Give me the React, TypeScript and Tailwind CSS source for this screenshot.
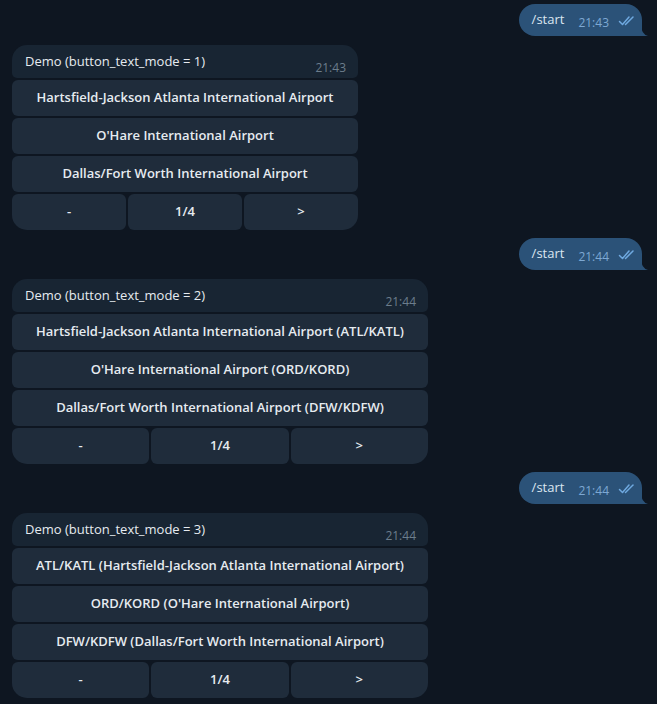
import React from "react";

const FONT = { fontFamily: '"Open Sans", "Noto Sans", sans-serif' };

function Checks() {
  return (
    <svg width="20" height="12" viewBox="0 0 20 12" className="ml-[9px] mt-[6px]">
      <path d="M1.5 6.5 L4.5 9.5 L11 2" fill="none" stroke="#6fa9e0" strokeWidth="1.5" strokeLinecap="round" strokeLinejoin="round" />
      <path d="M7.5 9.5 L15 2" fill="none" stroke="#6fa9e0" strokeWidth="1.5" strokeLinecap="round" strokeLinejoin="round" />
    </svg>
  );
}

function Outgoing({ time }: { time: string }) {
  return (
    <div className="flex justify-end pr-[15px]">
      <div className="relative">
        <div className="flex items-start h-[32px] bg-[#2b5278] rounded-[16px] rounded-br-none pl-[13px] pr-[4px] pt-[5px]">
          <span className="text-[13px] text-[#dbe6f0] leading-[20px]">/start</span>
          <span className="text-[12px] text-[#7da8d3] leading-[16px] ml-[14px] mt-[6px]">{time}</span>
          <Checks />
        </div>
        <svg className="absolute bottom-0 right-[-6px]" width="7" height="12" viewBox="0 0 7 12">
          <path d="M0 0 Q0 10 7 12 L0 12 Z" fill="#2b5278" />
        </svg>
      </div>
    </div>
  );
}

function Btn({ children, className = "" }: { children: React.ReactNode; className?: string }) {
  return (
    <div className={"h-[36px] bg-[#1f2c3b] flex items-center justify-center text-[13px] font-semibold text-[#e6ebf0] " + className}>
      {children}
    </div>
  );
}

function Incoming({ mode, time, width, rows }: { mode: number; time: string; width: string; rows: string[] }) {
  return (
    <div className={"pl-[12px] flex flex-col gap-[2px] " + width}>
      <div className="h-[33px] bg-[#182533] rounded-t-[15px] rounded-b-[5px] flex justify-between pl-[13px] pr-[12px] pt-[6px]">
        <span className="text-[13px] text-[#e6ebf0] leading-[20px]">Demo (button_text_mode = {mode})</span>
        <span className="text-[12px] text-[#6c7d8c] leading-[16px] mt-[9px]">{time}</span>
      </div>
      {rows.map((r) => (
        <Btn key={r} className="rounded-[6px]">{r}</Btn>
      ))}
      <div className="grid grid-cols-3 gap-[2px]">
        <Btn className="rounded-[6px] rounded-bl-[15px]">-</Btn>
        <Btn className="rounded-[6px]">1/4</Btn>
        <Btn className="rounded-[6px] rounded-br-[15px]">&gt;</Btn>
      </div>
    </div>
  );
}

export default function App() {
  return (
    <div className="w-[657px] h-[704px] bg-[#0e1621] overflow-hidden" style={FONT}>
      <div className="pt-[4px]">
        <Outgoing time="21:43" />
        <div className="mt-[9px]">
          <Incoming
            mode={1}
            time="21:43"
            width="w-[358px]"
            rows={[
              "Hartsfield-Jackson Atlanta International Airport",
              "O'Hare International Airport",
              "Dallas/Fort Worth International Airport",
            ]}
          />
        </div>
        <div className="mt-[8px]">
          <Outgoing time="21:44" />
        </div>
        <div className="mt-[9px]">
          <Incoming
            mode={2}
            time="21:44"
            width="w-[428px]"
            rows={[
              "Hartsfield-Jackson Atlanta International Airport (ATL/KATL)",
              "O'Hare International Airport (ORD/KORD)",
              "Dallas/Fort Worth International Airport (DFW/KDFW)",
            ]}
          />
        </div>
        <div className="mt-[8px]">
          <Outgoing time="21:44" />
        </div>
        <div className="mt-[9px]">
          <Incoming
            mode={3}
            time="21:44"
            width="w-[428px]"
            rows={[
              "ATL/KATL (Hartsfield-Jackson Atlanta International Airport)",
              "ORD/KORD (O'Hare International Airport)",
              "DFW/KDFW (Dallas/Fort Worth International Airport)",
            ]}
          />
        </div>
      </div>
    </div>
  );
}
